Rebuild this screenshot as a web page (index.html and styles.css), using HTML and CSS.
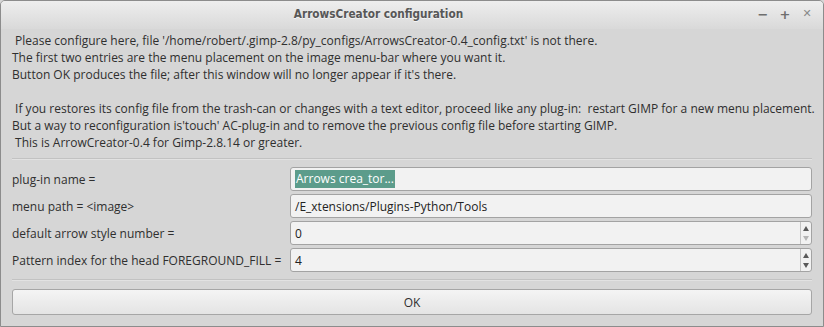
FILE: index.html
```html
<!DOCTYPE html>
<html lang="en">
<head>
  <meta charset="UTF-8">
  <title>ArrowsCreator configuration</title>
  <link rel="stylesheet" href="styles.css">
</head>
<body>

<div class="window">
  <div class="titlebar">
    <span class="title">ArrowsCreator configuration</span>
    <div class="controls">
      <span class="ctl">&minus;</span>
      <span class="ctl">+</span>
      <span class="ctl close">&#x2715;</span>
    </div>
  </div>

  <div class="content">
    <div class="message"> Please configure here, file '/home/robert/.gimp-2.8/py_configs/ArrowsCreator-0.4_config.txt' is not there.
The first two entries are the menu placement on the image menu-bar where you want it.
Button OK produces the file; after this window will no longer appear if it's there.

 If you restores its config file from the trash-can or changes with a text editor, proceed like any plug-in:  restart GIMP for a new menu placement.
But a way to reconfiguration is'touch' AC-plug-in and to remove the previous config file before starting GIMP.
 This is ArrowCreator-0.4 for Gimp-2.8.14 or greater.</div>

    <div class="sep"></div>

    <div class="form">
      <label>plug-in name =</label>
      <div class="field"><span class="selected">Arrows crea_tor...</span></div>

      <label>menu path = &lt;image&gt;</label>
      <div class="field">/E_xtensions/Plugins-Python/Tools</div>

      <label>default arrow style number =</label>
      <div class="field spin">
        <span class="value">0</span>
        <span class="arrows">
          <span class="up"></span>
          <span class="down off"></span>
        </span>
      </div>

      <label>Pattern index for the head FOREGROUND_FILL =</label>
      <div class="field spin">
        <span class="value">4</span>
        <span class="arrows">
          <span class="up"></span>
          <span class="down"></span>
        </span>
      </div>
    </div>

    <div class="sep last"></div>

    <button class="ok">OK</button>
  </div>
</div>

</body>
</html>
```

FILE: styles.css
```css
* {
  box-sizing: border-box;
}
body {
  margin: 0;
  background: #d6d6d6;
  font-family: "Open Sans", "Noto Sans", sans-serif;
  font-size: 12px;
  color: #2f2f2f;
}
.window {
  width: 824px;
  height: 327px;
  border: 1px solid #8c8c8c;
  border-radius: 5px 5px 0 0;
  background: #d6d6d6;
  overflow: hidden;
}
.titlebar {
  height: 28px;
  background: linear-gradient(#eeeeee, #d9d9d9);
  display: flex;
  align-items: center;
  padding-right: 9px;
}
.title {
  flex: 1;
  text-align: center;
  padding-bottom: 2px;
  font-family: "DejaVu Sans Condensed", "Noto Sans", sans-serif;
  font-weight: bold;
  font-size: 11.7px;
  color: #575757;
  text-shadow: 0 1px 0 #f4f4f4;
}
.controls {
  display: flex;
  gap: 8px;
  padding-bottom: 2px;
}
.ctl {
  width: 14px;
  text-align: center;
  font-family: "DejaVu Sans", sans-serif;
  font-weight: bold;
  font-size: 13px;
  color: #6e6e6e;
}
.ctl.close {
  font-size: 11px;
  color: #8a8a8a;
}
.content {
  padding: 3px 11px 0 11px;
}
.message {
  white-space: pre;
  line-height: 17px;
}
.sep {
  height: 2px;
  border-top: 1px solid #c2c2c2;
  border-bottom: 1px solid #e2e2e2;
  margin: 7px 0 7px 0;
}
.sep.last {
  margin: 7px 0 8px 0;
}
.form {
  display: grid;
  grid-template-columns: 278px 1fr;
  row-gap: 3px;
  align-items: center;
}
.field {
  height: 24px;
  background: #f2f2f2;
  border: 1px solid #a3a3a3;
  border-radius: 3px;
  padding: 0 4px;
  display: flex;
  align-items: center;
  color: #222222;
}
.selected {
  background: #5c9c8b;
  color: #ffffff;
  padding: 0 1px;
  line-height: 18px;
}
.spin {
  padding-right: 0;
  justify-content: space-between;
}
.arrows {
  width: 11px;
  height: 100%;
  border-left: 1px solid #c4c4c4;
  display: flex;
  flex-direction: column;
  align-items: center;
  justify-content: center;
  gap: 5px;
}
.up, .down {
  width: 0;
  height: 0;
  border-left: 3px solid transparent;
  border-right: 3px solid transparent;
}
.up {
  border-bottom: 5px solid #5a5a5a;
}
.down {
  border-top: 5px solid #5a5a5a;
}
.down.off {
  border-top-color: #b5b5b5;
}
.ok {
  display: block;
  width: 100%;
  height: 26px;
  margin: 0;
  font-family: inherit;
  font-size: 12px;
  color: #2f2f2f;
  background: linear-gradient(#f4f4f4, #e4e4e4);
  border: 1px solid #a6a6a6;
  border-radius: 3px;
}
```
